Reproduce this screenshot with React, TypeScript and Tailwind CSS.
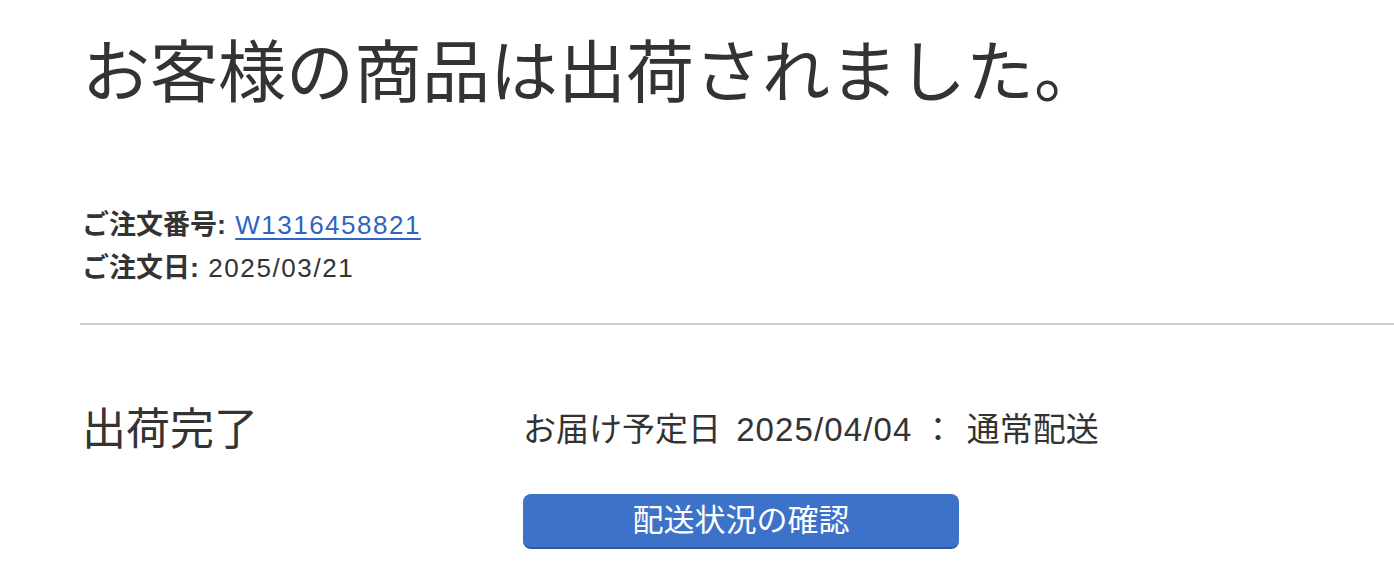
export default function App() {
  return (
    <div className="min-h-screen bg-white pl-[80px] text-[#333333] [font-family:'Liberation_Sans','Noto_Sans_CJK_JP',sans-serif]">
      <h1 className="pt-[33px] pl-[2px] text-[68px] leading-[80px] font-normal">お客様の商品は出荷されました。</h1>

      <div className="mt-[91px] pl-[2px] text-[26px] leading-[43px]">
        <div>
          <span className="text-[27px] font-bold">ご注文番号:</span>{' '}
          <a href="#" className="ml-[2px] tracking-[1.5px] text-[#2f63c4] underline underline-offset-[4px]">W1316458821</a>
        </div>
        <div>
          <span className="text-[27px] font-bold">ご注文日:</span>{' '}
          <span className="ml-[2px] tracking-[1.6px]">2025/03/21</span>
        </div>
      </div>

      <div className="mt-[33px] h-[2px] bg-[#d0d0d0]" />

      <div className="mt-[83px] flex">
        <div className="w-[443px] pl-[2px] text-[44px] leading-[44px]">出荷完了</div>
        <div className="flex flex-col">
          <div className="text-[33px] leading-[44px]">
            お届け予定日 <span className="ml-[6px] tracking-[1.1px]">2025/04/04</span> ： <span className="ml-[3px]">通常配送</span>
          </div>
          <button className="mt-[42px] h-[55px] w-[436px] rounded-[8px] border-b-2 border-[#2c5aa6] bg-[#3d72c9] text-[31px] leading-[53px] text-white">
            配送状況の確認
          </button>
        </div>
      </div>
    </div>
  );
}
